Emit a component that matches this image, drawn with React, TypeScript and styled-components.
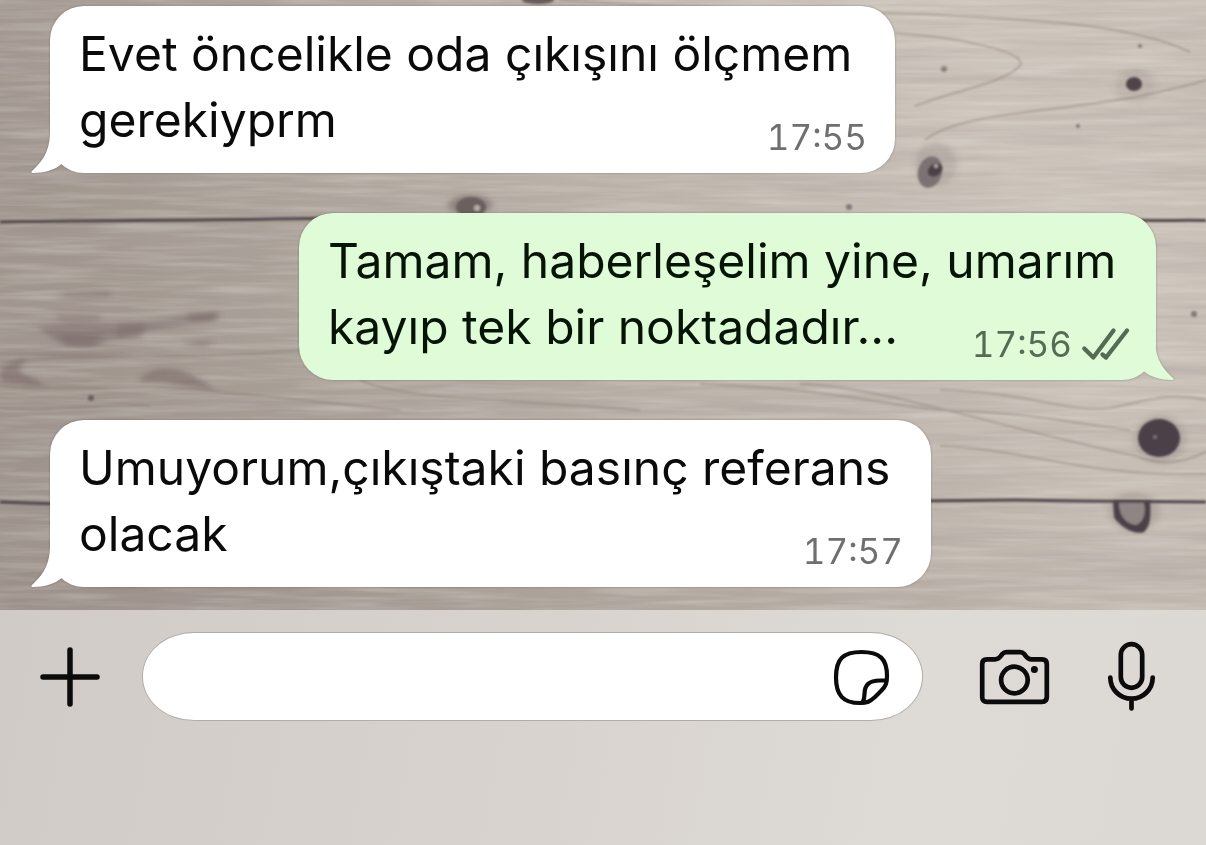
import React from "react";
import styled, { createGlobalStyle } from "styled-components";

const GlobalStyle = createGlobalStyle`
  * { box-sizing: border-box; }
  body { margin: 0; font-family: Inter, "Liberation Sans", sans-serif; color: #0a0a0a; }
`;

const Page = styled.div`
  display: flex;
  flex-direction: column;
  min-height: 100vh;
`;

const Chat = styled.main`
  position: relative;
  isolation: isolate;
  overflow: hidden;
  background: #b8b0a7;
`;

const Wallpaper = styled.svg`
  position: absolute;
  inset: 0;
  width: 100%;
  height: 100%;
  z-index: -1;
`;

const Messages = styled.ol`
  display: flex;
  flex-direction: column;
  gap: 40px;
  margin: 0;
  padding: 6px 50px 23px;
  list-style: none;
`;

const Bubble = styled.li<{ $sent?: boolean; $max: number }>`
  position: relative;
  display: grid;
  align-self: ${(p) => (p.$sent ? "flex-end" : "flex-start")};
  max-width: ${(p) => p.$max}px;
  padding: 15px 28px 15px 29px;
  border-radius: 34px;
  background: ${(p) => (p.$sent ? "#dffbd8" : "#ffffff")};
  color: ${(p) => (p.$sent ? "#061405" : "#0a0a0a")};
  filter: drop-shadow(0 0 1px rgba(60, 50, 45, 0.4));
`;

const Tail = styled.svg<{ $sent?: boolean }>`
  position: absolute;
  bottom: 0;
  ${(p) => (p.$sent ? "right: -18px; transform: scaleX(-1);" : "left: -19px;")}
  width: 40px;
  height: 50px;
  fill: ${(p) => (p.$sent ? "#dffbd8" : "#ffffff")};
`;

const Text = styled.p`
  grid-area: 1 / 1;
  margin: 0;
  padding-bottom: 5px;
  font-size: 48px;
  line-height: 66px;
`;

const Meta = styled.div<{ $sent?: boolean }>`
  grid-area: 1 / 1;
  place-self: end;
  display: flex;
  align-items: center;
  gap: 10px;
  font-size: 35px;
  font-variant-numeric: tabular-nums;
  line-height: 42px;
  color: ${(p) => (p.$sent ? "#566b54" : "#6f6f71")};
`;

const Composer = styled.footer`
  display: flex;
  flex: 1;
  align-items: flex-start;
  min-height: 235px;
  padding: 22px 51px 0 40px;
  background: linear-gradient(100deg, #d0cbc6 0%, #d8d3cf 45%, #dedad6 75%, #dcd8d3 100%);
`;

const IconButton = styled.button`
  display: flex;
  align-items: center;
  flex: none;
  height: 89px;
  padding: 0;
  border: 0;
  background: none;
  color: #0b0b0b;
`;

const Field = styled.div`
  display: flex;
  flex: 1;
  min-width: 0;
  height: 89px;
  margin: 0 57px 0 42px;
  padding: 0 33px 0 40px;
  border: 1px solid #b1adaa;
  border-radius: 52px / 44px;
  background: #ffffff;
`;

const Input = styled.input`
  flex: 1;
  min-width: 0;
  border: 0;
  outline: 0;
  background: none;
  font: inherit;
  font-size: 48px;
`;

const Actions = styled.div`
  display: flex;
  gap: 59px;
`;

const Line = styled.svg`
  display: block;
  overflow: visible;
  fill: none;
  stroke: currentColor;
  stroke-linecap: round;
  stroke-linejoin: round;
`;

function Wood() {
  return (
    <Wallpaper viewBox="0 0 1206 610" preserveAspectRatio="none" aria-hidden="true">
      <defs>
        <linearGradient id="base" x1="0" x2="1" y1="0.15" y2="0">
          <stop offset="0" stopColor="#a1978f" />
          <stop offset="0.25" stopColor="#b0a79e" />
          <stop offset="0.5" stopColor="#bfb7ad" />
          <stop offset="0.8" stopColor="#cdc6bc" />
          <stop offset="1" stopColor="#cac2b8" />
        </linearGradient>
        <linearGradient id="shade" x1="0" x2="0" y1="0" y2="1">
          <stop offset="0" stopColor="#6a5e5a" stopOpacity="0" />
          <stop offset="0.6" stopColor="#6a5e5a" stopOpacity="0.03" />
          <stop offset="1" stopColor="#6a5e5a" stopOpacity="0.12" />
        </linearGradient>
        <filter id="grain" x="0" y="0" width="100%" height="100%">
          <feTurbulence type="fractalNoise" baseFrequency="0.003 0.07" numOctaves="4" seed="8" />
          <feColorMatrix values="0 0 0 0 0.4  0 0 0 0 0.34  0 0 0 0 0.33  0.8 0 0 0 -0.3" />
        </filter>
        <filter id="light" x="0" y="0" width="100%" height="100%">
          <feTurbulence type="fractalNoise" baseFrequency="0.01 0.16" numOctaves="3" seed="21" />
          <feColorMatrix values="0 0 0 0 0.9  0 0 0 0 0.87  0 0 0 0 0.83  0.5 0 0 0 -0.2" />
        </filter>
        <filter id="soft" x="-30%" y="-60%" width="160%" height="220%">
          <feGaussianBlur stdDeviation="3 2" />
        </filter>
        <filter id="edge" x="-20%" y="-20%" width="140%" height="140%">
          <feGaussianBlur stdDeviation="1" />
        </filter>
      </defs>
      <rect width="1206" height="610" fill="url(#base)" />
      <rect width="1206" height="610" fill="url(#shade)" />
      <rect width="1206" height="610" filter="url(#grain)" />
      <rect width="1206" height="610" filter="url(#light)" />

      <g fill="none" stroke="#8b7d75" strokeWidth="2" opacity="0.45" filter="url(#edge)">
        <path d="M560 0C700 10 800 10 920 14C1040 20 1130 24 1190 52" />
        <path d="M895 33C960 38 1020 50 1021 64C1010 82 950 92 915 106" />
        <path d="M925 140C960 112 1060 112 1140 96C1170 90 1200 82 1206 80" />
        <path d="M0 364C60 350 180 362 300 350" />
        <path d="M0 386C80 392 140 382 200 390C280 398 340 404 400 410" />
        <path d="M0 408C60 414 110 400 150 406" />
        <path d="M360 380C400 400 520 400 640 410" />
        <path d="M940 390C1030 392 1060 412 1110 408C1150 400 1170 392 1206 400" />
        <path d="M700 384C830 388 900 408 940 410C1030 412 1090 426 1130 430" />
        <path d="M800 384C880 386 1000 428 1136 456C1160 466 1180 464 1206 452" />
        <path d="M940 446C1020 448 1090 478 1206 474" />
      </g>

      <g fill="#6f5c5c" filter="url(#soft)">
        <path opacity=".4" d="M36 328C70 318 110 326 146 322L218 312V321L146 331C130 338 110 338 100 345C80 350 56 345 50 336Z" />
        <path opacity=".3" d="M60 292L110 290V297H64ZM185 342L212 340L208 347L188 346ZM55 314H100V320H60Z" />
        <path opacity=".3" d="M118 322H148L140 340H116ZM60 334H102L96 346H66ZM186 312H218L212 322H190Z" />
        <path opacity=".5" d="M0 368C8 364 18 360 26 358C24 364 14 370 24 374C32 378 42 380 44 386C30 386 10 382 0 382Z" />
        <path opacity=".45" d="M140 378C155 364 180 368 196 377L216 390C190 388 166 380 140 382Z" />
        <ellipse cx="66" cy="355" rx="70" ry="2" opacity=".35" />
        <ellipse cx="470" cy="205" rx="22" ry="10" opacity=".5" />
        <ellipse cx="936" cy="164" rx="21" ry="22" opacity=".18" />
        <ellipse cx="1135" cy="86" rx="20" ry="18" opacity=".12" />
        <ellipse cx="1160" cy="439" rx="26" ry="24" opacity=".2" />
        <ellipse cx="1134" cy="512" rx="26" ry="20" opacity=".2" />
      </g>

      <g fill="none" stroke="#50454a" filter="url(#edge)">
        <path strokeWidth="3" d="M0 222C100 220 200 221 330 218" />
        <path strokeWidth="3" d="M1130 220C1160 221 1180 220 1206 220.500" />
        <path strokeWidth="3" d="M0 502L60 504" />
        <path strokeWidth="3" d="M920 501L1015 500L1080 501L1206 502" />
      </g>

      <g filter="url(#edge)">
        <ellipse cx="471" cy="207" rx="15" ry="10" fill="#6c605f" />
        <circle cx="477" cy="208" r="3" fill="#b7afa8" />
        <ellipse cx="538" cy="0" rx="16" ry="4" fill="#665b5a" />
        <ellipse cx="1134" cy="84" rx="8" ry="7" fill="#51454a" />
        <ellipse cx="930" cy="172" rx="12" ry="16" fill="#7d7273" transform="rotate(15 930 172)" />
        <ellipse cx="935" cy="170" rx="8" ry="6" fill="#4c4247" transform="rotate(-35 935 170)" />
        <circle cx="936" cy="166" r="2" fill="#b4acaa" />
        <ellipse cx="1159" cy="438" rx="21" ry="19" fill="#4b4047" />
        <circle cx="1155" cy="437" r="2" fill="#7e7478" />
        <path d="M1113 501H1150C1151 514 1151 526 1144 532C1134 536 1118 525 1114 517Z" fill="#4c4248" />
        <path d="M1119 503H1144C1146 512 1144 522 1136 525C1126 524 1119 516 1119 503Z" fill="#8f8584" />
        <circle cx="944" cy="69" r="3" fill="#8d817c" />
        <circle cx="849" cy="207" r="3" fill="#84787a" />
        <circle cx="1078" cy="126" r="2" fill="#84787a" />
        <circle cx="1140" cy="46" r="2" fill="#84787a" />
        <circle cx="91" cy="398" r="3" fill="#6c6061" />
        <circle cx="1194" cy="314" r="3" fill="#84787a" />
      </g>
    </Wallpaper>
  );
}

function Message(props: { text: string; time: string; max: number; sent?: boolean }) {
  const { text, time, max, sent } = props;
  return (
    <Bubble $sent={sent} $max={max}>
      <Tail $sent={sent} viewBox="0 0 40 50" aria-hidden="true">
        <path d="M19 0V8C19 28 12 38 0.500 48.500Q0 50 2 50C14 50 23 47 30 41.500L40 30V0Z" />
      </Tail>
      <Text>{text}</Text>
      <Meta $sent={sent}>
        <time>{time}</time>
        {sent && (
          <Line width="46" height="32" viewBox="0 0 46 32" strokeWidth="4.300" role="img" aria-label="Okundu">
            <path d="M2.300 20.500L11.300 29.500L31.500 2.500M20.500 26.500L24 29.500L45 2.500" />
          </Line>
        )}
      </Meta>
    </Bubble>
  );
}

export default function App() {
  return (
    <Page>
      <GlobalStyle />
      <Chat>
        <Wood />
        <Messages>
          <Message text="Evet öncelikle oda çıkışını ölçmem gerekiyprm" time="17:55" max={845} />
          <Message text="Tamam, haberleşelim yine, umarım kayıp tek bir noktadadır..." time="17:56" max={857} sent />
          <Message text="Umuyorum,çıkıştaki basınç referans olacak" time="17:57" max={881} />
        </Messages>
      </Chat>
      <Composer>
        <IconButton type="button" aria-label="Ekle">
          <Line width="60" height="60" viewBox="0 0 60 60" strokeWidth="5.500">
            <path d="M30 3V57M3 30H57" />
          </Line>
        </IconButton>
        <Field>
          <Input type="text" aria-label="Mesaj" />
          <IconButton type="button" aria-label="Çıkartma">
            <Line width="55" height="55" viewBox="0 0 55 55" strokeWidth="4.200">
              <path d="M27.500 2C46 2 53 9 53 26C53 33 52 36 47 41L41 47C36 51.500 33 53 26 53C9 53 2 45 2 27.500C2 9 9 2 27.500 2Z" />
              <path d="M52 30.500H46C35 30.500 30.500 35 30.500 44C30.500 48 30 50 28.500 52.500" />
            </Line>
          </IconButton>
        </Field>
        <Actions>
          <IconButton type="button" aria-label="Kamera">
            <Line width="69" height="54" viewBox="0 0 69 54" strokeWidth="4.700">
              <path d="M7 9.300H15C17.500 9.300 18.800 8.500 20.300 6.600L22.300 4C23.500 2.600 24.500 2.200 26.500 2.200H40C42 2.200 43 2.600 44.200 4L46.200 6.600C47.700 8.500 49 9.300 51.500 9.300H62C65.300 9.300 66.800 10.800 66.800 14V47C66.800 50.300 65.300 51.800 62 51.800H7C3.700 51.800 2.200 50.300 2.200 47V14C2.200 10.800 3.700 9.300 7 9.300Z" />
              <circle cx="34.400" cy="30" r="13.300" />
              <circle cx="54.400" cy="19.500" r="3.500" fill="currentColor" stroke="none" />
            </Line>
          </IconButton>
          <IconButton type="button" aria-label="Sesli mesaj">
            <Line width="47" height="69" viewBox="0 0 47 69" strokeWidth="4.700">
              <rect x="12.800" y="2.200" width="21.400" height="43.600" rx="10.700" />
              <path d="M2.300 35.500A21.200 21.200 0 0 0 44.700 35.500M23.500 57V66.500" />
            </Line>
          </IconButton>
        </Actions>
      </Composer>
    </Page>
  );
}
